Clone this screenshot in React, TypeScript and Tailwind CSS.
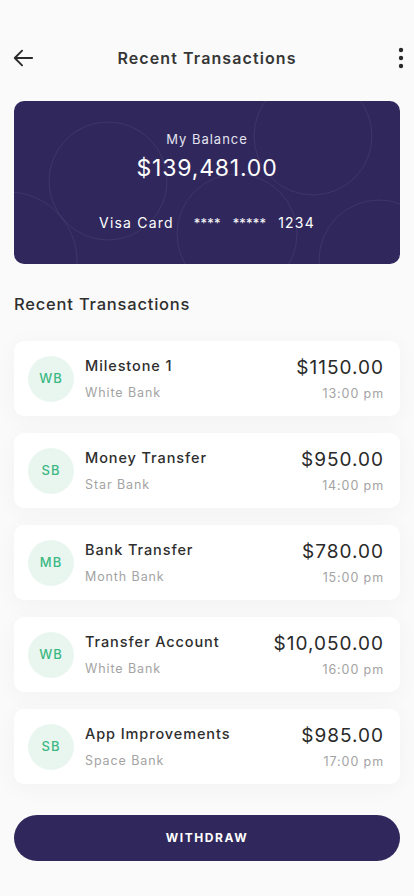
import React from "react";

const transactions = [
  { initials: "WB", title: "Milestone 1", bank: "White Bank", amount: "$1150.00", time: "13:00 pm" },
  { initials: "SB", title: "Money Transfer", bank: "Star Bank", amount: "$950.00", time: "14:00 pm" },
  { initials: "MB", title: "Bank Transfer", bank: "Month Bank", amount: "$780.00", time: "15:00 pm" },
  { initials: "WB", title: "Transfer Account", bank: "White Bank", amount: "$10,050.00", time: "16:00 pm" },
  { initials: "SB", title: "App Improvements", bank: "Space Bank", amount: "$985.00", time: "17:00 pm" },
];

export default function App() {
  return (
    <div
      className="min-h-[896px] w-[414px] bg-[#fafafa] px-[14px] pt-10"
      style={{ fontFamily: "Inter, 'Noto Sans', sans-serif" }}
    >
      {/* header */}
      <div className="flex h-9 items-center">
        <div className="flex w-8 items-center">
          <svg width="22" height="22" viewBox="0 0 24 24" fill="none" className="-ml-[2px]">
            <path d="M22 12H3M11 4l-8 8 8 8" stroke="#2a2a2a" strokeWidth="2" strokeLinecap="round" strokeLinejoin="round" />
          </svg>
        </div>
        <h1 className="flex-1 text-center text-[16px] font-semibold tracking-[1.1px] text-[#363636]">
          Recent Transactions
        </h1>
        <div className="flex w-8 items-center justify-end">
          <svg width="6" height="22" viewBox="0 0 6 22" className="-mr-[4px]">
            <circle cx="3" cy="3" r="2.2" fill="#2a2a2a" />
            <circle cx="3" cy="11" r="2.2" fill="#2a2a2a" />
            <circle cx="3" cy="19" r="2.2" fill="#2a2a2a" />
          </svg>
        </div>
      </div>

      {/* balance card */}
      <div className="relative mt-[25px] h-[163px] overflow-hidden rounded-[10px] bg-[#30285c]">
        <svg className="absolute inset-0" width="386" height="163" viewBox="0 0 386 163" fill="none">
          <g stroke="rgba(255,255,255,0.07)" strokeWidth="1">
            <circle cx="94" cy="80" r="59" />
            <circle cx="299" cy="35" r="59" />
            <circle cx="223" cy="133" r="60" />
            <circle cx="-6" cy="160" r="69" />
            <circle cx="365" cy="159" r="60" />
          </g>
        </svg>
        <div className="relative flex flex-col items-center pt-[30px] text-white">
          <p className="text-[13px] leading-4 tracking-[1px] text-[#e4e2ef]">My Balance</p>
          <p className="mt-[7px] text-[23px] leading-7 tracking-[0.8px]">$139,481.00</p>
          <div className="mt-[33px] flex items-center text-[14px] leading-4">
            <span className="tracking-[1.2px]">Visa Card</span>
            <span className="ml-[20px] text-[13px] tracking-[0.2px]">****</span>
            <span className="ml-[12px] text-[13px] tracking-[0.2px]">*****</span>
            <span className="ml-[12px] tracking-[1.2px]">1234</span>
          </div>
        </div>
      </div>

      <h2 className="mt-[28px] text-[16.5px] font-medium leading-6 tracking-[0.8px] text-[#2f2f2f]">
        Recent Transactions
      </h2>

      <div className="mt-[25px] flex flex-col gap-[17px]">
        {transactions.map((t, i) => (
          <div
            key={i}
            className="flex h-[75px] items-center rounded-[10px] bg-white pl-[14px] pr-4 shadow-[0_4px_24px_rgba(0,0,0,0.035)]"
          >
            <div className="flex h-[46px] w-[46px] items-center justify-center rounded-full bg-[#e9f6f0] text-[13px] font-medium tracking-[1px] text-[#3cb883]">
              {t.initials}
            </div>
            <div className="ml-[11px] flex flex-1 flex-col">
              <p className="text-[14.5px] font-medium leading-5 tracking-[0.9px] text-[#2e2e2e]">{t.title}</p>
              <p className="mt-[9px] text-[12.5px] leading-4 tracking-[0.9px] text-[#a3a3a3]">{t.bank}</p>
            </div>
            <div className="flex flex-col items-end">
              <p className="text-[19px] leading-6 tracking-[1px] text-[#2a2a2a]">{t.amount}</p>
              <p className="mt-[6px] text-[12.5px] leading-4 tracking-[0.9px] text-[#a3a3a3]">{t.time}</p>
            </div>
          </div>
        ))}
      </div>

      <button className="mt-[31px] flex h-[46px] w-full items-center justify-center rounded-full bg-[#30285c] text-[12px] font-bold tracking-[1.6px] text-white">
        WITHDRAW
      </button>
    </div>
  );
}
